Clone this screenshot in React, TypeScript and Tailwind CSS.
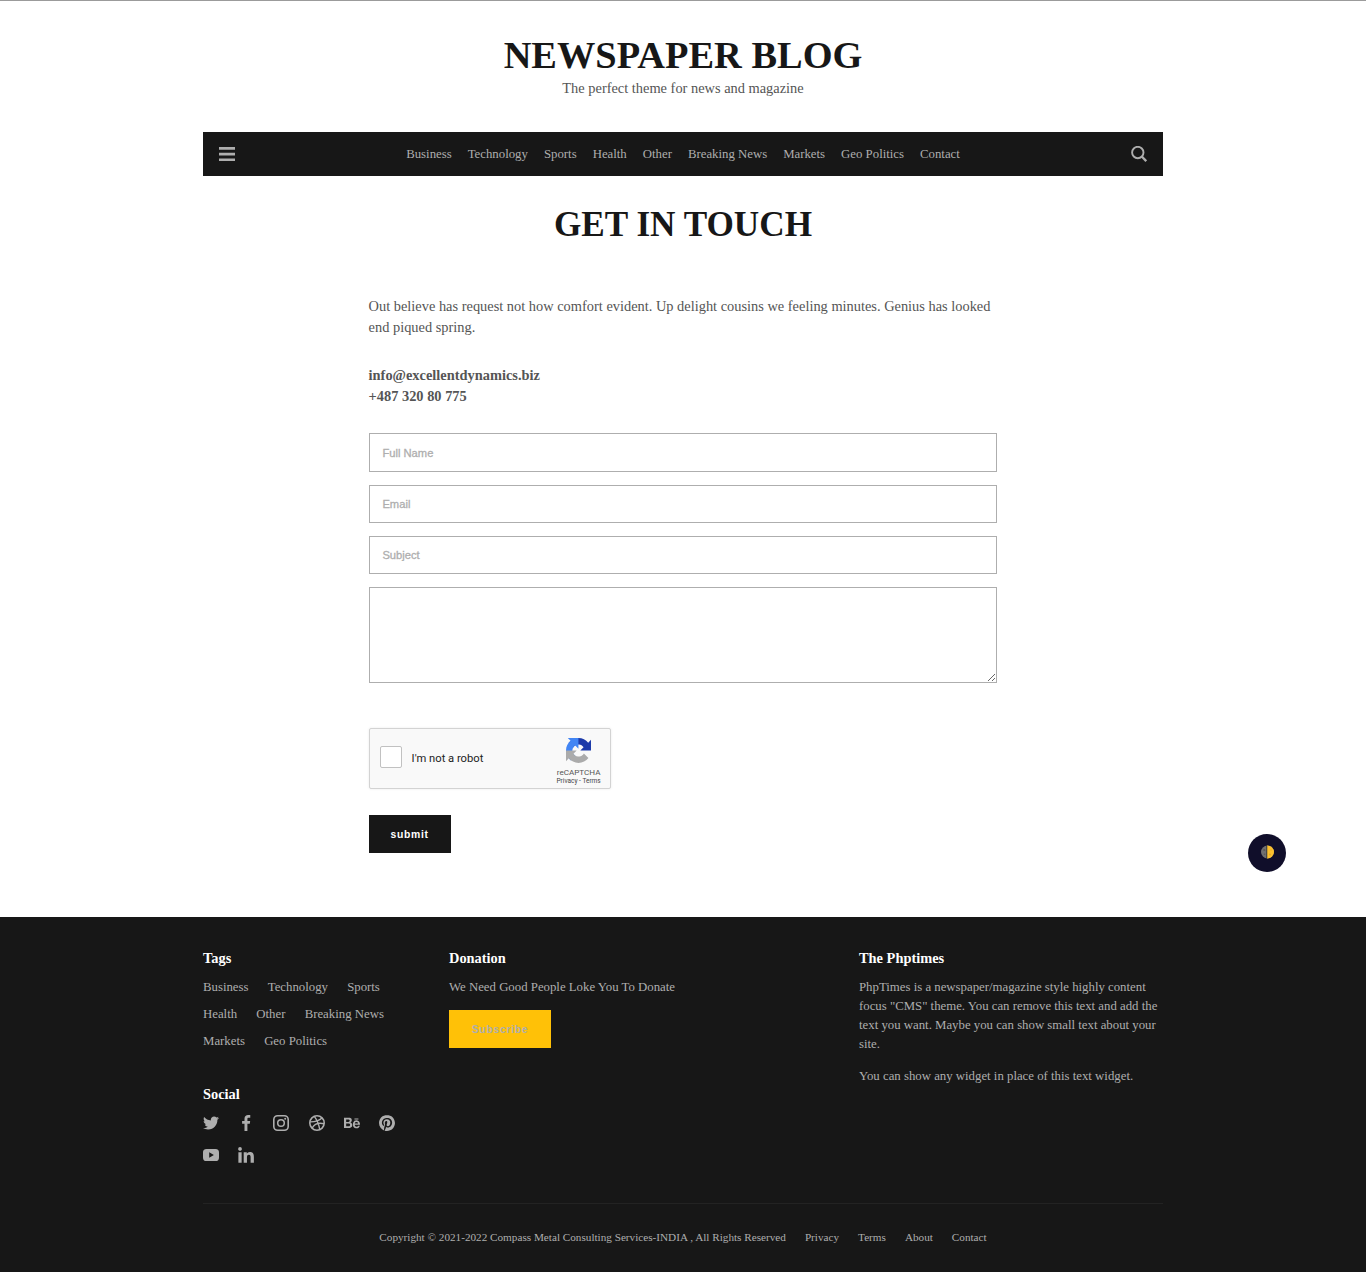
import { FaTwitter, FaLinkedinIn } from "react-icons/fa";
import { SiBehance, SiPinterest } from "react-icons/si";

const navLinks = ["Business", "Technology", "Sports", "Health", "Other", "Breaking News", "Markets", "Geo Politics", "Contact"];
const tagRows = [
  ["Business", "Technology", "Sports"],
  ["Health", "Other", "Breaking News"],
  ["Markets", "Geo Politics"],
];

function YoutubeIcon() {
  return (
    <svg viewBox="0 0 16 16" className="size-4" fill="currentColor">
      <path
        fillRule="evenodd"
        d="M3.6 2h8.8C15 2 16 3.2 16 5.6v4.8c0 2.4-1 3.6-3.6 3.6H3.6C1 14 0 12.8 0 10.4V5.6C0 3.2 1 2 3.6 2ZM6.2 5.2v5.6L10.900 8Z"
      />
    </svg>
  );
}

function FacebookIcon() {
  return (
    <svg viewBox="0 0 16 16" className="size-4" fill="currentColor">
      <path d="M9.400 16V8.700h2.400l.35-2.800H9.400V4.100c0-.8.220-1.350 1.380-1.350h1.470V.1C11.900.07 11 0 10.100 0 8 0 6.500 1.300 6.500 3.700v2.200H4.100v2.800h2.400V16Z" />
    </svg>
  );
}

function InstagramIcon() {
  return (
    <svg viewBox="0 0 16 16" className="size-4" fill="none" stroke="currentColor">
      <rect x=".8" y=".8" width="14.400" height="14.400" rx="3.800" strokeWidth="1.600" />
      <circle cx="8" cy="8" r="3.300" strokeWidth="1.500" />
      <circle cx="12.200" cy="3.800" r="1" fill="currentColor" stroke="none" />
    </svg>
  );
}

function DribbbleIcon() {
  return (
    <svg viewBox="0 0 16 16" className="size-4" fill="none" stroke="currentColor" strokeWidth="1.400">
      <circle cx="8" cy="8" r="7.200" strokeWidth="1.600" />
      <path d="M5.300 1.400C8 4.800 9.700 8.600 10.700 14.500M.9 6.900c4.700.1 9-.9 12.100-3.900M3.100 13.100c2.400-4.300 6.800-5.600 12-4.300" />
    </svg>
  );
}

function RecaptchaLogo() {
  return (
    <svg viewBox="0 0 64 64" className="size-[25px]">
      <path fill="#1C3AA9" d="M64 31.955l-.033-1.37V4.687l-7.16 7.16C50.948 4.674 42.033.093 32.05.093c-10.4 0-19.622 4.96-25.458 12.64l11.736 11.86a15.55 15.55 0 0 1 4.754-5.334c2.05-1.6 4.952-2.906 8.968-2.906.485 0 .86.057 1.135.163 4.976.393 9.288 3.14 11.828 7.124l-8.307 8.307L64 31.953" />
      <path fill="#4285F4" d="M31.862.094l-1.37.033H4.594l7.16 7.16C4.58 13.147 0 22.06 0 32.046c0 10.4 4.96 19.622 12.64 25.458L24.5 45.768a15.55 15.55 0 0 1-5.334-4.754c-1.6-2.05-2.906-4.952-2.906-8.968 0-.485.057-.86.163-1.135.393-4.976 3.14-9.288 7.124-11.828l8.307 8.307L31.86.095" />
      <path fill="#ABABAB" d="M.001 32.045l.033 1.37v25.898l7.16-7.16c5.86 7.173 14.774 11.754 24.76 11.754 10.4 0 19.622-4.96 25.458-12.64l-11.736-11.86a15.55 15.55 0 0 1-4.754 5.334c-2.05 1.6-4.952 2.906-8.968 2.906-.485 0-.86-.057-1.135-.163-4.976-.393-9.288-3.14-11.828-7.124l8.307-8.307c-10.522.04-22.4.066-27.295-.005" />
    </svg>
  );
}

function Header() {
  return (
    <>
      <div className="pt-[34px] text-center">
        <h1 className="text-[38.4px] leading-10 font-bold text-[#171717]">NEWSPAPER BLOG</h1>
        <p className="mt-[3px] text-[14.4px] leading-[21px]">The perfect theme for news and magazine</p>
      </div>
      <nav className="mt-[33px] flex h-11 items-center justify-between bg-[#171717] px-4 text-[#aeaeae]">
        <svg viewBox="0 0 16 16" className="size-4" fill="currentColor">
          <path d="M0 1h16v2.700H0ZM0 6.700h16v2.700H0ZM0 12.400h16V15H0Z" />
        </svg>
        <div className="flex gap-4 text-[12.8px] leading-5">
          {navLinks.map((l) => (
            <a key={l} href="#">{l}</a>
          ))}
        </div>
        <svg viewBox="0 0 16 16" className="size-4" fill="none" stroke="currentColor">
          <circle cx="6.800" cy="6.500" r="5.700" strokeWidth="1.900" />
          <path d="M10.800 10.500 15.200 15.200" strokeWidth="2.300" />
        </svg>
      </nav>
    </>
  );
}

const field = "block h-[38.4px] w-full border border-[#aeaeae] bg-white px-[12.8px] font-['Liberation_Sans',sans-serif] text-[11.2px] placeholder:text-[#aeaeae] placeholder:opacity-100 placeholder:[-webkit-text-stroke:0.3px_#aeaeae] outline-none";

function ContactForm() {
  return (
    <form className="mt-[26.4px]" onSubmit={(e) => e.preventDefault()}>
      <div className="flex flex-col gap-[12.8px]">
        <input className={field} placeholder="Full Name" />
        <input className={field} placeholder="Email" />
        <input className={field} placeholder="Subject" />
        <textarea className="block h-24 w-full border border-[#aeaeae] bg-white outline-none" />
      </div>
      <div className="mt-[45px] flex h-[61px] w-[242px] justify-between rounded-[2px] border border-[#d3d3d3] bg-[#f9f9f9] shadow-[0_0_3px_rgba(0,0,0,0.08)] font-['Roboto',sans-serif] text-[#222]">
        <div className="flex items-center gap-2.5 pl-2.5">
          <span className="mb-[3px] size-[22px] rounded-[2px] border-[1.5px] border-[#c1c1c1] bg-white" />
          <span className="pt-px text-[11.2px] leading-[14px]">I'm not a robot</span>
        </div>
        <div className="mr-[7px] flex w-[48px] flex-col items-center pt-[9px] text-[#555]">
          <RecaptchaLogo />
          <span className="mt-1 text-[8.1px] leading-[10px]">reCAPTCHA</span>
          <span className="text-[6.5px] leading-[9px] whitespace-nowrap text-[#444]">Privacy - Terms</span>
        </div>
      </div>
      <button className="mt-[26px] block h-[38px] w-[82px] bg-[#171717] pt-0.5 font-['Liberation_Sans',sans-serif] text-[10.4px] font-bold tracking-[0.7px] text-white">
        submit
      </button>
    </form>
  );
}

function Footer() {
  return (
    <footer className="mt-16 h-[355px] bg-[#171717] pt-8 text-[12.8px] leading-[19px] text-[#aeaeae]">
      <div className="mx-auto w-[960px]">
        <div className="grid h-[254px] grid-cols-[246px_410px_304px]">
          <div>
            <h4 className="text-[14.4px] leading-[18px] font-bold text-white">Tags</h4>
            <div className="mt-[7px] leading-[27px]">
              {tagRows.map((r) => (
                <div key={r[0]} className="flex gap-[19.2px]">
                  {r.map((t) => (
                    <a key={t} href="#">{t}</a>
                  ))}
                </div>
              ))}
            </div>
            <h4 className="mt-[30px] text-[14.4px] leading-[18px] font-bold text-white">Social</h4>
            <div className="mt-[12px] grid w-fit grid-cols-[repeat(6,16px)] justify-items-center gap-x-[19.2px] gap-y-4">
              <FaTwitter size={16} />
              <FacebookIcon />
              <InstagramIcon />
              <DribbbleIcon />
              <SiBehance size={16} />
              <SiPinterest size={16} />
              <YoutubeIcon />
              <FaLinkedinIn size={18} />
            </div>
          </div>
          <div>
            <h4 className="text-[14.4px] leading-[18px] font-bold text-white">Donation</h4>
            <p className="mt-[11px]">We Need Good People Loke You To Donate</p>
            <button className="mt-[13px] block h-[38px] w-[102px] bg-[#ffc107] pt-0.5 font-['Liberation_Sans',sans-serif] text-[10.4px] font-bold tracking-[0.7px] text-[#aeaeae]">
              Subscribe
            </button>
          </div>
          <div>
            <h4 className="text-[14.4px] leading-[18px] font-bold text-white">The Phptimes</h4>
            <p className="mt-[11px]">
              PhpTimes is a newspaper/magazine style highly content focus "CMS" theme. You can remove this text and add the text you want. Maybe you can show small text about your site.
            </p>
            <p className="mt-[13px]">You can show any widget in place of this text widget.</p>
          </div>
        </div>
        <div className="flex justify-center gap-[19px] border-t border-[#232323] pt-6 text-[11.2px]">
          <span>Copyright © 2021-2022 Compass Metal Consulting Services-INDIA , All Rights Reserved</span>
          <a href="#">Privacy</a>
          <a href="#">Terms</a>
          <a href="#">About</a>
          <a href="#">Contact</a>
        </div>
      </div>
    </footer>
  );
}

export default function App() {
  return (
    <div className="relative h-[1272px] overflow-hidden border-t border-[#9b9b9b] bg-white font-['Liberation_Serif',serif] text-[#555]">
      <div className="mx-auto w-[960px]">
        <Header />
        <h2 className="mt-[29px] text-center text-[35.2px] leading-10 font-bold text-[#171717]">GET IN TOUCH</h2>
        <main className="mx-auto mt-[51px] w-[628.8px] text-[14.4px] leading-[21px]">
          <p>Out believe has request not how comfort evident. Up delight cousins we feeling minutes. Genius has looked end piqued spring.</p>
          <div className="mt-[27px] font-bold">
            <p>info@excellentdynamics.biz</p>
            <p>+487 320 80 775</p>
          </div>
          <ContactForm />
        </main>
      </div>
      <Footer />
      <button className="absolute top-[833px] right-20 flex size-[38px] items-center justify-center rounded-full bg-[#100e2a] pb-[3px]">
        <svg viewBox="0 0 14 14" className="size-3.5">
          <circle cx="7.500" cy="7" r="6.500" fill="#707070" />
          <path d="M7 .5h.5a6.500 6.500 0 0 1 0 13H7Z" fill="#fcc02e" />
          <circle cx="10" cy="9.500" r="1" fill="#e5a91f" />
          <circle cx="11" cy="5" r=".7" fill="#e5a91f" />
          <circle cx="4.300" cy="5" r="1.100" fill="#585858" />
          <circle cx="4.500" cy="9.300" r=".8" fill="#585858" />
          <path d="M6.800 .5v13" stroke="#2b2b2b" strokeWidth=".8" />
        </svg>
      </button>
    </div>
  );
}
